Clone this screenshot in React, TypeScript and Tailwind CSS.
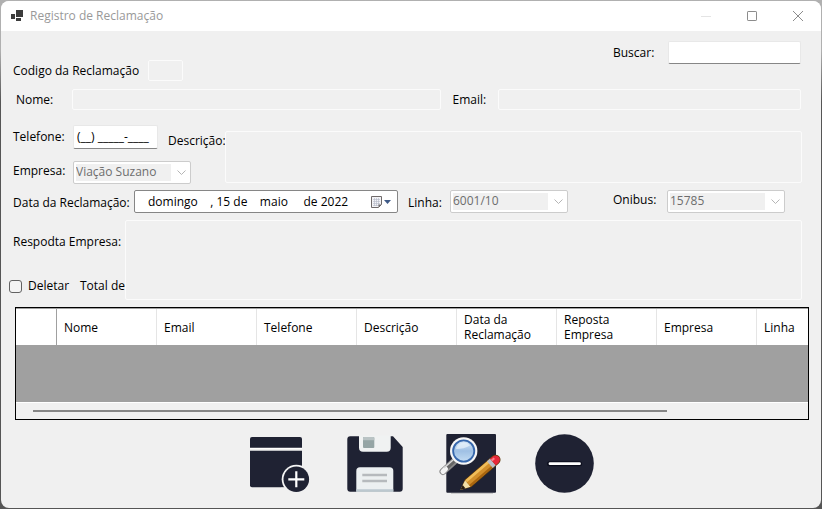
import type { ReactNode } from 'react';

const columns: ReactNode[] = [
  'Nome',
  'Email',
  'Telefone',
  'Descrição',
  <>Data da<br />Reclamação</>,
  <>Reposta<br />Empresa</>,
  'Empresa',
  'Linha',
];

const readOnlyBox = 'rounded-[2px] border border-[#fbfbfb] bg-[#f0f0f0] px-1 outline-none';

function Combo({ id, value }: { id: string; value: string }) {
  return (
    <div className="flex h-[23px] w-[118px] shrink-0 items-center rounded-[2px] border border-[#cccccc] bg-white p-[2px]">
      <select
        id={id}
        disabled
        defaultValue={value}
        className="h-full min-w-0 flex-1 appearance-none bg-[#f0f0f0] pb-px text-[#6d6d6d] disabled:opacity-100"
      >
        <option>{value}</option>
      </select>
      <svg className="mr-[2px] ml-[6px] h-[9px] w-[9px]" viewBox="0 0 9 9" fill="none" stroke="#b5b5b5">
        <path d="M0.5 2.5 4.5 6.5 8.5 2.5" />
      </svg>
    </div>
  );
}

function TitleBar() {
  return (
    <header className="flex h-[30px] items-center bg-white pr-[18px] pl-[10px] text-[#999999]">
      <svg className="h-3 w-3" viewBox="0 0 12 12" fill="#3c3c3c">
        <path d="M5 0h7v7H5zM0 4h4v5H0zM5 8h5v3H5z" />
      </svg>
      <h1 className="ml-[7px] flex-1">Registro de Reclamação</h1>
      <div className="flex items-center gap-9">
        <button aria-label="Minimizar" disabled>
          <svg className="h-[10px] w-[10px]" viewBox="0 0 10 10" stroke="#e4e4e4">
            <path d="M0 5.5h10" />
          </svg>
        </button>
        <button aria-label="Maximizar">
          <svg className="h-[10px] w-[10px]" viewBox="0 0 10 10" fill="none" stroke="#8c8c8c">
            <rect x="0.5" y="0.5" width="9" height="9" rx="0.6" />
          </svg>
        </button>
        <button aria-label="Fechar">
          <svg className="h-[10px] w-[10px]" viewBox="0 0 10 10" stroke="#8c8c8c">
            <path d="M0 0 10 10M10 0 0 10" />
          </svg>
        </button>
      </div>
    </header>
  );
}

function NewIcon() {
  return (
    <svg className="h-16 w-16" viewBox="0 0 64 64">
      <path d="M5 5h48a2 2 0 0 1 2 2v8.7H3V7a2 2 0 0 1 2-2z" fill="#1f2233" />
      <path d="M3 18.7h52v34.6a2 2 0 0 1-2 2H5a2 2 0 0 1-2-2z" fill="#1f2233" />
      <path d="M3 16.5h52" stroke="#fff" />
      <circle cx="49.3" cy="47.3" r="14.6" fill="#f5f5f5" />
      <path d="M55.5 32v30H64V32z" fill="#f0f0f0" />
      <path d="M34 55.7h24v8H34z" fill="#f0f0f0" />
      <circle cx="49.3" cy="47.3" r="12.8" fill="#1f2233" />
      <path d="M41.3 47.3h16M49.3 39.3v16" stroke="#fff" strokeWidth="2.2" />
    </svg>
  );
}

function SaveIcon() {
  return (
    <svg className="h-16 w-16" viewBox="0 0 64 64">
      <path
        d="M7.3 4.3H50L59.7 15v41.7a3 3 0 0 1-3 3H7.3a3 3 0 0 1-3-3V7.3a3 3 0 0 1 3-3z"
        fill="#1f2233"
      />
      <path d="M16 3.5h31.7v12.2a4 4 0 0 1-4 4H20a4 4 0 0 1-4-4z" fill="#f0f2f2" />
      <rect x="20" y="5" width="11.3" height="11" rx="1" fill="#95a5a5" />
      <path d="M20 6a1 1 0 0 1 1-1h9.3a1 1 0 0 1 1 1v2.2H20z" fill="#b9c3c4" />
      <path d="M13.3 59.7V39a3.7 3.7 0 0 1 3.7-3.7h29.6a3.7 3.7 0 0 1 3.7 3.7v20.7z" fill="#ecf0f1" />
      <path d="M13.3 57.2h37v2.5h-37z" fill="#bcc8cf" />
      <path d="M19.3 43H44M19.3 49H44" stroke="#b6babd" strokeWidth="2.6" />
    </svg>
  );
}

function EditIcon() {
  return (
    <svg className="h-16 w-16" viewBox="0 0 64 64">
      <defs>
        <linearGradient id="glass" x1="0" y1="0" x2="0" y2="1">
          <stop offset="0" stopColor="#d9e9f8" />
          <stop offset="0.5" stopColor="#9fc0e4" />
          <stop offset="1" stopColor="#c3dcf3" />
        </linearGradient>
      </defs>
      <path d="M12 61.3h42" stroke="#c4c4c4" />
      <rect x="7.3" y="2" width="49.7" height="58.7" rx="1" fill="#1f2233" />
      <path d="M15 29.5 4 39.5" stroke="#8a8a8a" strokeWidth="7" strokeLinecap="round" />
      <path d="M15 29 8 35.5" stroke="#666666" strokeWidth="4" />
      <path d="M6.5 37 4 39.5" stroke="#f4f4f4" strokeWidth="5" strokeLinecap="round" />
      <path d="M14 28 5 36" stroke="#d9d9d9" strokeWidth="1.5" />
      <circle cx="24.7" cy="19" r="13.7" fill="#f7f7f7" />
      <circle cx="24.7" cy="19" r="10.6" fill="url(#glass)" stroke="#3768ad" strokeWidth="1.8" />
      <path d="M17 17a8 8 0 0 1 14-3.5Q25 17 17 17z" fill="#eaf3fb" opacity="0.7" />
      <g transform="translate(21.3 58) rotate(-40.7)">
        <path d="M0 0 10-5H46.5a5 5 0 0 1 0 10H10z" fill="#5f3b0c" />
        <path d="M0 0 10-4.2V4.2z" fill="#f3dfa6" />
        <path d="M0 0 5-2.2V2.2z" fill="#2a1c10" />
        <path d="M10-4.2H40V4.2H10z" fill="#d28f2b" />
        <path d="M10-4.2H40V-1.5H10z" fill="#f0bd5a" />
        <path d="M10 2H40V4.2H10z" fill="#a9650f" />
        <path d="M39-4.4h4v8.8h-4z" fill="#b8bcc6" />
        <path d="M43-4.3h3.5a4.3 4.3 0 0 1 0 8.6H43z" fill="#e8283a" />
        <path d="M43-3h3.5v2.2H43z" fill="#ff7d86" />
      </g>
    </svg>
  );
}

function RemoveIcon() {
  return (
    <svg className="h-16 w-16" viewBox="0 0 64 64">
      <circle cx="29.5" cy="31.5" r="29.3" fill="#1f2233" />
      <path d="M14.5 31.7h30" stroke="#0b0d1c" strokeWidth="5" strokeLinecap="round" />
      <path d="M15 31.7h29.5" stroke="#fff" strokeWidth="2.8" strokeLinecap="round" />
    </svg>
  );
}

export default function App() {
  return (
    <div className="flex min-h-screen flex-col bg-[#6b6b6b] bg-linear-to-b from-[#b0b0b0] from-10% to-[#555555] to-20% p-px font-['Open_Sans','Noto_Sans',sans-serif] text-xs text-black">
      <main className="flex flex-1 flex-col overflow-hidden rounded-lg bg-[#f0f0f0]">
        <TitleBar />

        <form className="flex flex-col pt-[10px] pr-3 pl-3">
          <div className="flex items-start justify-between pr-2">
            <div className="mt-[19px] flex items-center">
              <label htmlFor="codigo" className="w-[135px]">Codigo da Reclamação</label>
              <input id="codigo" readOnly className={`${readOnlyBox} h-[21px] w-[35px]`} />
            </div>
            <div className="flex items-center">
              <label htmlFor="buscar" className="w-[55px]">Buscar:</label>
              <input
                id="buscar"
                type="search"
                className="h-[23px] w-[133px] rounded-[2px] border border-[#e8e8e8] border-b-[#868686] bg-white px-1 outline-none"
              />
            </div>
          </div>

          <div className="mt-2 flex items-center pr-2">
            <label htmlFor="nome" className="w-[59px] pl-[3px]">Nome:</label>
            <input id="nome" readOnly className={`${readOnlyBox} h-[21px] min-w-0 flex-11`} />
            <label htmlFor="email" className="ml-3 w-[45px]">Email:</label>
            <input id="email" readOnly className={`${readOnlyBox} h-[21px] min-w-0 flex-9`} />
          </div>

          <div className="mt-[15px] flex items-start pr-[7px]">
            <div className="flex w-[178px] flex-col gap-3">
              <div className="flex items-center">
                <label htmlFor="telefone" className="w-[60px]">Telefone:</label>
                <input
                  id="telefone"
                  type="tel"
                  defaultValue="(__) _____-____"
                  className="h-6 w-[85px] rounded-[2px] border border-[#e8e8e8] border-b-[#868686] bg-white px-[3px] pb-[2px] outline-none"
                />
              </div>
              <div className="flex items-center">
                <label htmlFor="empresa" className="w-[60px] pb-1">Empresa:</label>
                <Combo id="empresa" value="Viação Suzano" />
              </div>
            </div>
            <label htmlFor="descricao" className="-ml-[23px] mt-2 w-[57px]">Descrição:</label>
            <textarea id="descricao" readOnly className={`${readOnlyBox} mt-[6px] h-[52px] min-w-0 flex-1 resize-none`} />
          </div>

          <div className="mt-[6px] flex items-center pr-6">
            <label htmlFor="data" className="w-[121px] pt-[3px]">Data da Reclamação:</label>
            <div className="flex h-[23px] w-[264px] items-center rounded-[2px] border border-[#868686] bg-white">
              <input
                id="data"
                defaultValue="domingo    , 15 de    maio     de 2022"
                className="h-full min-w-0 flex-1 bg-transparent pl-[13px] outline-none"
              />
              <button type="button" aria-label="Abrir calendário" className="mr-[6px]">
                <svg className="h-3 w-5" viewBox="0 0 20 12">
                  <path d="M.5.5h10v8l-3 3h-7z" fill="#f3f3f6" stroke="#6f6a6a" />
                  <path d="M2 3.5h7M2 5.5h7M2 7.5h7M2 9.5h5M3.500 2v8M5.500 2v8M7.500 2v8" stroke="#b4b8c8" strokeWidth="0.6" />
                  <path d="M10.5 8.5h-3v3z" fill="#6f6a6a" />
                  <path d="M13 4h7l-3.5 4z" fill="#3f5a87" />
                </svg>
              </button>
            </div>
            <label htmlFor="linha" className="ml-[10px] w-[42px] pt-[3px]">Linha:</label>
            <Combo id="linha" value="6001/10" />
            <label htmlFor="onibus" className="ml-auto w-[54px] pb-[3px]">Onibus:</label>
            <Combo id="onibus" value="15785" />
          </div>

          <div className="mt-[7px] flex items-stretch pr-[7px]">
            <div className="-ml-1 flex w-[116px] flex-col justify-between pt-[14px] pb-[6px] whitespace-nowrap">
              <label htmlFor="resposta" className="pl-1">Respodta Empresa:</label>
              <div className="flex items-center">
                <input
                  id="deletar"
                  type="checkbox"
                  className="h-[13px] w-[13px] appearance-none rounded-[3px] border border-[#626262] bg-[#f4f4f4] checked:bg-[#0067c0]"
                />
                <label htmlFor="deletar" className="ml-[6px]">Deletar</label>
                <span className="ml-auto">Total de</span>
              </div>
            </div>
            <textarea id="resposta" readOnly className={`${readOnlyBox} h-20 min-w-0 flex-1 resize-none`} />
          </div>
        </form>

        <section className="mt-[7px] mr-3 ml-[14px] border border-black">
          <div className="h-[94px] overflow-hidden border-t border-[#a0a0a0] bg-[#a0a0a0]">
            <table className="w-[840px] table-fixed border-separate border-spacing-0 bg-white">
              <thead>
                <tr className="h-9 text-left leading-[15px]">
                  <th className="w-[41px] border-r border-[#a0a0a0]" />
                  {columns.map((name, i) => (
                    <th key={i} className="w-[100px] border-r border-[#e5e5e5] pl-[7px] font-normal">{name}</th>
                  ))}
                </tr>
              </thead>
            </table>
          </div>
          <div className="h-[17px] border-t border-white bg-[#f0f0f0] pt-[7px]">
            <div className="ml-[17px] h-[2px] w-4/5 bg-[#868686]" />
          </div>
        </section>

        <nav className="mt-3 flex justify-center gap-8 pl-6">
          <button aria-label="Novo"><NewIcon /></button>
          <button aria-label="Salvar"><SaveIcon /></button>
          <button aria-label="Editar"><EditIcon /></button>
          <button aria-label="Remover"><RemoveIcon /></button>
        </nav>
      </main>
    </div>
  );
}
